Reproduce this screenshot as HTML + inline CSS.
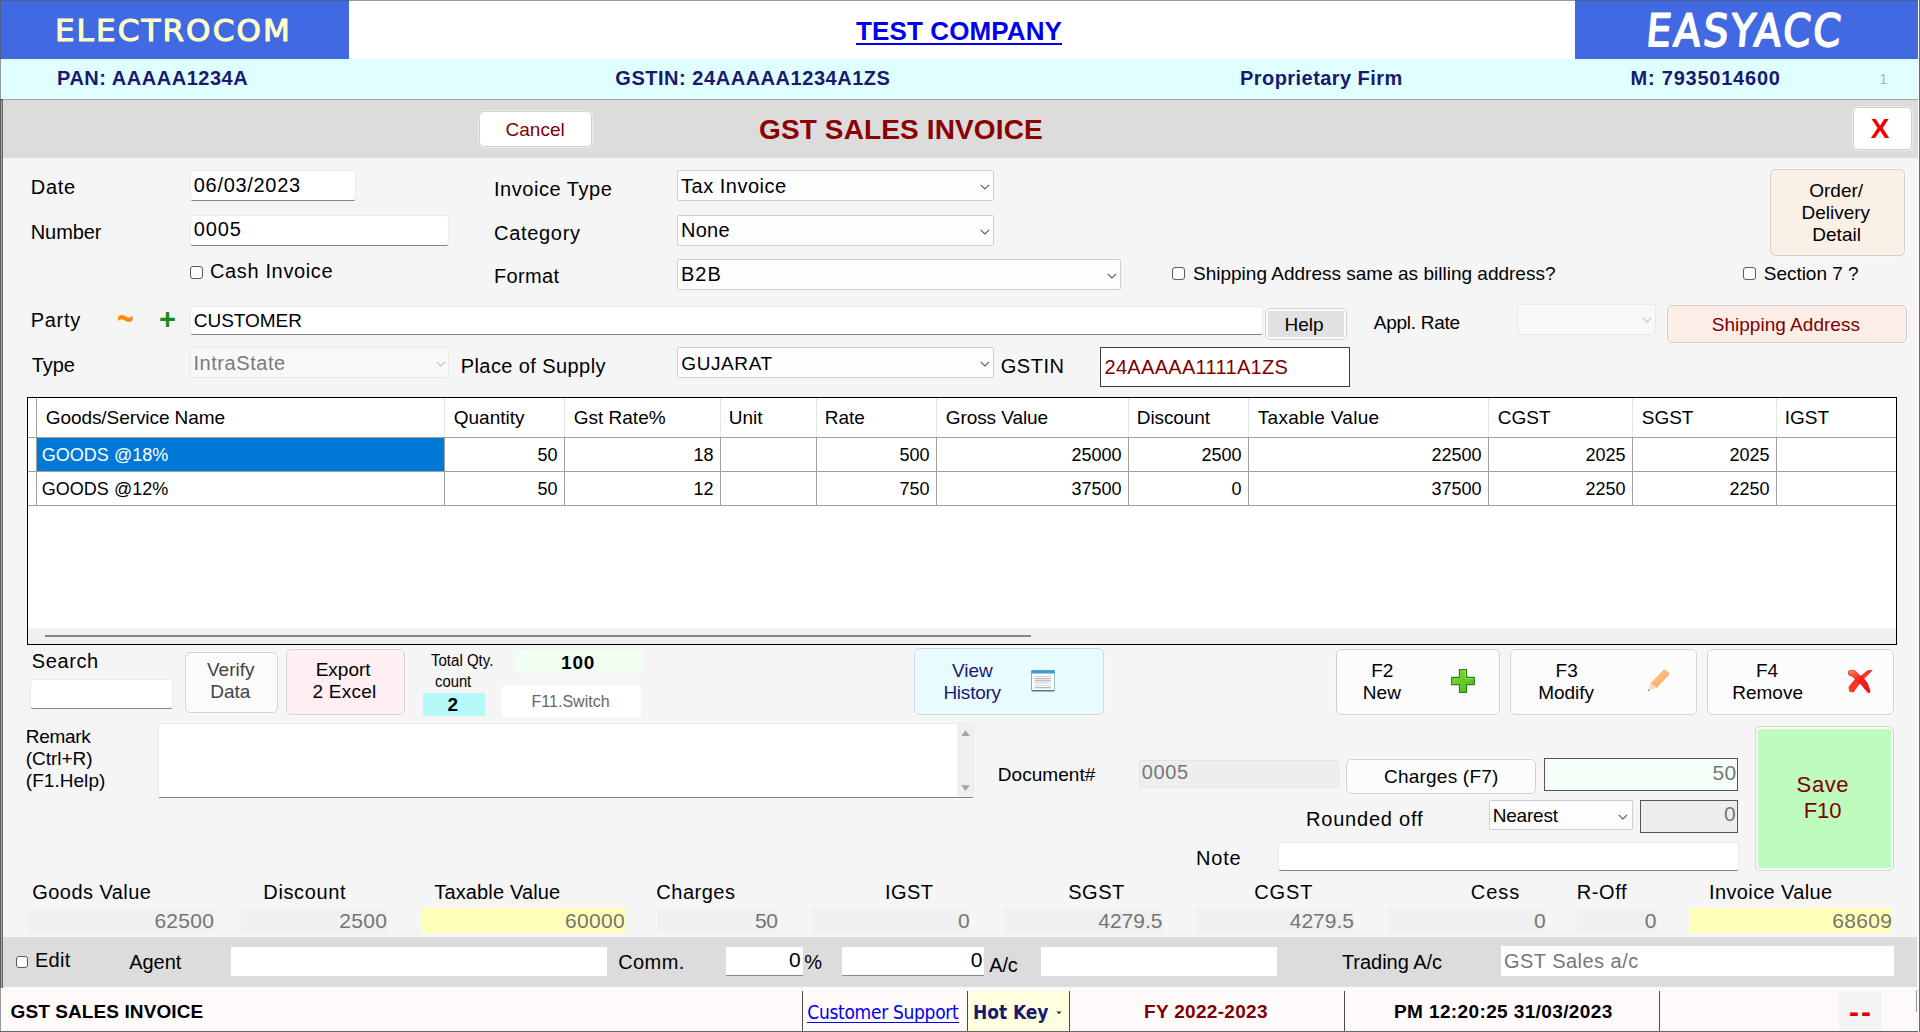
<!DOCTYPE html>
<html><head><meta charset="utf-8"><title>GST SALES INVOICE</title>
<style>
*{box-sizing:border-box;margin:0;padding:0}
html,body{width:1920px;height:1032px;overflow:hidden;background:#f5f5f5}
body{font-family:"Liberation Sans",sans-serif;font-size:20px;color:#000;position:relative}
.a{position:absolute}
.t{position:absolute;white-space:nowrap;line-height:1;display:block}
.in{position:absolute;background:#fff;border:1px solid #ececec;border-bottom:1px solid #858585;border-radius:3px}
.sel{position:absolute;background:#fdfdfd;border:1px solid #cfcfcf;border-radius:2px}
.dis{position:absolute;background:#f8f8f8;border:1px solid #e9e9e9;border-radius:3px}
.btn{position:absolute;border:1px solid #d2d2d2;border-radius:5px;background:#fbfbfb;box-shadow:0 0 0 1px #fafafa}
.cb{position:absolute;border:1px solid #5a5a5a;border-radius:3px;background:#fff}
.vl{position:absolute;width:1px}
.hl{position:absolute;height:1px}
</style></head><body>
<div class="a" style="left:0px;top:0px;width:1920px;height:59px;background:#fff"></div>
<div class="a" style="left:0px;top:0px;width:349px;height:58.5px;background:#4169e1"></div>
<div class="a" style="left:1575px;top:0px;width:343px;height:58.5px;background:#4169e1"></div>
<div class="a" style="left:0px;top:58.5px;width:1920px;height:40.5px;background:#e0ffff"></div>
<div class="a" style="left:0px;top:0px;width:1920px;height:1px;background:rgba(85,85,85,.6)"></div>
<div class="a" style="left:856px;top:43px;width:205.6px;height:2px;background:#0000ee"></div>
<svg class="a" style="left:1575px;top:0" width="343" height="58" viewBox="0 0 343 58"><text transform="translate(70.3,46.2) skewX(-5) scale(0.88,1)" font-family="'DejaVu Sans','Liberation Sans',sans-serif" font-size="44.5" fill="#fff" stroke="#fff" stroke-width="2" stroke-linejoin="round" textLength="220.5" lengthAdjust="spacing">EASYACC</text></svg>
<div class="a" style="left:0px;top:99px;width:1918px;height:58.6px;background:#dcdcdc;border-top:1.6px solid #a3a3a3"></div>
<div class="btn" style="left:479px;top:111px;width:113px;height:36px;background:#fff;border-color:#cfcfcf;box-shadow:0 0 0 1px #ececec"></div>
<div class="btn" style="left:1852.5px;top:107px;width:59.0px;height:43px;background:#fff;border-color:#cfcfcf;box-shadow:0 0 0 1px #ececec"></div>
<div class="in" style="left:190px;top:170px;width:165.5px;height:31px;"></div>
<div class="in" style="left:190px;top:215px;width:258.5px;height:31px;"></div>
<div class="cb" style="left:190px;top:266px;width:13px;height:13px;"></div>
<div class="sel" style="left:677px;top:170px;width:317px;height:31px;"></div>
<svg class="a" style="left:979.7px;top:183.8px" width="10" height="7" viewBox="0 0 10 7"><path d="M0.7 0.8 L4.9 5 L9.1 0.8" fill="none" stroke="#5a5a5a" stroke-width="1.1"/></svg>
<div class="sel" style="left:677px;top:215px;width:317px;height:31px;"></div>
<svg class="a" style="left:979.7px;top:228.8px" width="10" height="7" viewBox="0 0 10 7"><path d="M0.7 0.8 L4.9 5 L9.1 0.8" fill="none" stroke="#5a5a5a" stroke-width="1.1"/></svg>
<div class="sel" style="left:677px;top:259px;width:444px;height:31px;"></div>
<svg class="a" style="left:1107.3px;top:272.8px" width="10" height="7" viewBox="0 0 10 7"><path d="M0.7 0.8 L4.9 5 L9.1 0.8" fill="none" stroke="#5a5a5a" stroke-width="1.1"/></svg>
<div class="cb" style="left:1172px;top:267px;width:13px;height:13px;"></div>
<div class="btn" style="left:1770px;top:169px;width:135px;height:87px;background:#faf0e6;border-color:#d0d0d0"></div>
<div class="cb" style="left:1743px;top:267px;width:13px;height:13px;"></div>
<div class="in" style="left:190px;top:305.5px;width:1072.5px;height:29.5px;"></div>
<div class="a" style="left:1265px;top:308px;width:82px;height:32px;background:#e1e1e1;border:1px solid #d2d2d2;box-shadow:inset 0 0 0 2px #fafafa;border-radius:5px"></div>
<div class="dis" style="left:1517px;top:304px;width:138.5px;height:31px;"></div>
<svg class="a" style="left:1642px;top:316.8px" width="10" height="7" viewBox="0 0 10 7"><path d="M0.7 0.8 L4.9 5 L9.1 0.8" fill="none" stroke="#c4c4c4" stroke-width="1.1"/></svg>
<div class="btn" style="left:1667px;top:305px;width:240px;height:38px;background:#fbeee6;border-color:#d0d0d0"></div>
<div class="dis" style="left:190px;top:347px;width:258.5px;height:31px;"></div>
<svg class="a" style="left:435.5px;top:360.8px" width="10" height="7" viewBox="0 0 10 7"><path d="M0.7 0.8 L4.9 5 L9.1 0.8" fill="none" stroke="#c4c4c4" stroke-width="1.1"/></svg>
<div class="sel" style="left:677px;top:347px;width:317px;height:31px;"></div>
<svg class="a" style="left:979.7px;top:360.8px" width="10" height="7" viewBox="0 0 10 7"><path d="M0.7 0.8 L4.9 5 L9.1 0.8" fill="none" stroke="#5a5a5a" stroke-width="1.1"/></svg>
<div class="a" style="left:1100px;top:347px;width:250px;height:39.5px;background:#fff;border:1px solid #3c3c3c"></div>
<div class="a" style="left:27px;top:397px;width:1870px;height:248px;background:#fff;border:1px solid #000"></div>
<div class="a" style="left:36px;top:398px;width:1px;height:39px;background:#a0a0a0"></div>
<div class="a" style="left:444px;top:398px;width:1px;height:39px;background:#e4e4e4"></div>
<div class="a" style="left:564px;top:398px;width:1px;height:39px;background:#e4e4e4"></div>
<div class="a" style="left:720px;top:398px;width:1px;height:39px;background:#e4e4e4"></div>
<div class="a" style="left:816px;top:398px;width:1px;height:39px;background:#e4e4e4"></div>
<div class="a" style="left:936px;top:398px;width:1px;height:39px;background:#e4e4e4"></div>
<div class="a" style="left:1128px;top:398px;width:1px;height:39px;background:#e4e4e4"></div>
<div class="a" style="left:1248px;top:398px;width:1px;height:39px;background:#e4e4e4"></div>
<div class="a" style="left:1488px;top:398px;width:1px;height:39px;background:#e4e4e4"></div>
<div class="a" style="left:1632px;top:398px;width:1px;height:39px;background:#e4e4e4"></div>
<div class="a" style="left:1776px;top:398px;width:1px;height:39px;background:#e4e4e4"></div>
<div class="a" style="left:28px;top:437px;width:1868px;height:1px;background:#a0a0a0"></div>
<div class="a" style="left:28px;top:471px;width:1868px;height:1px;background:#a0a0a0"></div>
<div class="a" style="left:28px;top:505px;width:1868px;height:1px;background:#a0a0a0"></div>
<div class="a" style="left:36px;top:437px;width:1px;height:69px;background:#a0a0a0"></div>
<div class="a" style="left:444px;top:437px;width:1px;height:69px;background:#a0a0a0"></div>
<div class="a" style="left:564px;top:437px;width:1px;height:69px;background:#a0a0a0"></div>
<div class="a" style="left:720px;top:437px;width:1px;height:69px;background:#a0a0a0"></div>
<div class="a" style="left:816px;top:437px;width:1px;height:69px;background:#a0a0a0"></div>
<div class="a" style="left:936px;top:437px;width:1px;height:69px;background:#a0a0a0"></div>
<div class="a" style="left:1128px;top:437px;width:1px;height:69px;background:#a0a0a0"></div>
<div class="a" style="left:1248px;top:437px;width:1px;height:69px;background:#a0a0a0"></div>
<div class="a" style="left:1488px;top:437px;width:1px;height:69px;background:#a0a0a0"></div>
<div class="a" style="left:1632px;top:437px;width:1px;height:69px;background:#a0a0a0"></div>
<div class="a" style="left:1776px;top:437px;width:1px;height:69px;background:#a0a0a0"></div>
<div class="a" style="left:37px;top:438px;width:407px;height:33px;background:#0078d7"></div>
<div class="a" style="left:28px;top:628px;width:1868px;height:16px;background:#f0f0f0"></div>
<div class="a" style="left:45px;top:635px;width:986px;height:2px;background:#858585"></div>
<div class="in" style="left:29.5px;top:678.75px;width:143.0px;height:29.75px;"></div>
<div class="btn" style="left:184.5px;top:651.5px;width:93.0px;height:61.0px;background:#fbfbfb"></div>
<div class="btn" style="left:285.5px;top:649px;width:119.0px;height:65.5px;background:#ffeef2"></div>
<div class="a" style="left:514.5px;top:650.5px;width:129.25px;height:22.5px;background:#f0fff0"></div>
<div class="a" style="left:423px;top:693px;width:62px;height:23.25px;background:#b4f8f8"></div>
<div class="a" style="left:502px;top:685.75px;width:138.75px;height:31.0px;background:#fff"></div>
<div class="btn" style="left:914.25px;top:648px;width:189.5px;height:66.5px;background:#e8fcff;border-color:#d0d8da"></div>
<div class="btn" style="left:1336.25px;top:648.75px;width:163.5px;height:65.75px;background:#fcfcfc"></div>
<div class="btn" style="left:1509.5px;top:648.75px;width:187.0px;height:65.75px;background:#fcfcfc"></div>
<div class="btn" style="left:1706.5px;top:648.75px;width:187.0px;height:65.75px;background:#fcfcfc"></div>
<div class="in" style="left:157.5px;top:722.5px;width:816.5px;height:75.5px;border-radius:2px"></div>
<div class="a" style="left:957px;top:723.5px;width:16px;height:73.5px;background:#f0f0f0"></div>
<div class="a" style="left:1138.75px;top:759.5px;width:200.0px;height:28.0px;background:#eeeeee;border:1px solid #e6e6e6;border-radius:2px"></div>
<div class="btn" style="left:1346.25px;top:759.25px;width:189.25px;height:35.0px;background:#fcfcfc"></div>
<div class="a" style="left:1544px;top:758px;width:194px;height:32.75px;background:#f5fff8;border:1px solid #555"></div>
<div class="sel" style="left:1489px;top:800px;width:143.5px;height:29.5px;"></div>
<svg class="a" style="left:1618px;top:813.5px" width="10" height="7" viewBox="0 0 10 7"><path d="M0.7 0.8 L4.9 5 L9.1 0.8" fill="none" stroke="#5a5a5a" stroke-width="1.1"/></svg>
<div class="a" style="left:1640px;top:800px;width:98px;height:32.5px;background:#ededed;border:1px solid #555"></div>
<div class="in" style="left:1278px;top:842px;width:461.25px;height:29px;"></div>
<div class="a" style="left:1755px;top:726px;width:139px;height:145px;background:#bdfcbd;border:1px solid #d6d6d6;box-shadow:inset 0 0 0 2px #f8f8f8;border-radius:5px"></div>
<div class="a" style="left:29.3px;top:908.3px;width:185.0px;height:25.0px;background:#f0f0f0"></div>
<div class="a" style="left:241px;top:908.3px;width:146.3px;height:25.0px;background:#f0f0f0"></div>
<div class="a" style="left:420.7px;top:908.3px;width:204.3px;height:25.0px;background:#ffffb9"></div>
<div class="a" style="left:658.3px;top:908.3px;width:120.0px;height:25.0px;background:#f0f0f0"></div>
<div class="a" style="left:812.3px;top:908.3px;width:157.7px;height:25.0px;background:#f0f0f0"></div>
<div class="a" style="left:1004.3px;top:908.3px;width:158.4px;height:25.0px;background:#f0f0f0"></div>
<div class="a" style="left:1196.2px;top:908.3px;width:158.0px;height:25.0px;background:#f0f0f0"></div>
<div class="a" style="left:1388px;top:908.3px;width:158px;height:25.0px;background:#f0f0f0"></div>
<div class="a" style="left:1577px;top:908.3px;width:79.8px;height:25.0px;background:#f0f0f0"></div>
<div class="a" style="left:1690px;top:908.3px;width:202.2px;height:25.0px;background:#ffffb9"></div>
<div class="a" style="left:0px;top:936.7px;width:1917px;height:50.0px;background:#dcdcdc"></div>
<div class="cb" style="left:15.7px;top:955.7px;width:12.5px;height:12.5px;"></div>
<div class="a" style="left:231px;top:946.7px;width:376.3px;height:29.3px;background:#fff"></div>
<div class="a" style="left:725.7px;top:946.7px;width:77.0px;height:29.8px;background:#fff;border-bottom:1px solid #8a8a8a"></div>
<div class="a" style="left:841.7px;top:946.7px;width:142.3px;height:29.8px;background:#fff;border-bottom:1px solid #8a8a8a"></div>
<div class="a" style="left:1040.7px;top:946.7px;width:236.3px;height:29.3px;background:#fff"></div>
<div class="a" style="left:1501px;top:946.3px;width:393.2px;height:30.1px;background:#fff"></div>
<div class="a" style="left:0px;top:986.7px;width:1917px;height:45.3px;background:#fffafa"></div>
<div class="a" style="left:0px;top:1030.5px;width:1920px;height:1.5px;background:#666"></div>
<div class="a" style="left:967px;top:991px;width:102px;height:39.5px;background:#ffffe0"></div>
<div class="a" style="left:1839px;top:991px;width:42.7px;height:39.5px;background:#f4f4f4"></div>
<div class="a" style="left:802px;top:991px;width:1px;height:39.5px;background:#4a4a4a"></div>
<div class="a" style="left:966.5px;top:991px;width:1.0px;height:39.5px;background:#4a4a4a"></div>
<div class="a" style="left:1069px;top:991px;width:1px;height:39.5px;background:#4a4a4a"></div>
<div class="a" style="left:1344px;top:991px;width:1px;height:39.5px;background:#4a4a4a"></div>
<div class="a" style="left:1659px;top:991px;width:1px;height:39.5px;background:#4a4a4a"></div>
<div class="a" style="left:807.3px;top:1021.5px;width:151.7px;height:1.2px;background:#0000ee"></div>
<svg class="a" style="left:1056px;top:1010.5px" width="6" height="4" viewBox="0 0 6 4"><path d="M0.5 0.5 L5.5 0.5 L3 3.2 Z" fill="#222"/></svg>
<div class="a" style="left:0px;top:99px;width:3px;height:889px;background:#686868"></div>
<div class="a" style="left:1px;top:101px;width:1px;height:887px;background:#a4a4a4"></div>
<div class="a" style="left:1918px;top:0px;width:1px;height:1032px;background:#fcfcfc"></div>
<div class="a" style="left:1919px;top:0px;width:1px;height:1032px;background:#6a6a6a"></div>
<div class="a" style="left:1916px;top:990px;width:1px;height:22px;background:#9a9a9a"></div>
<div class="a" style="left:0px;top:0px;width:1px;height:1032px;background:rgba(85,85,85,.6)"></div>
<svg class="a" style="left:1031px;top:669.5px" width="24.2" height="22" viewBox="0 0 24.2 22"><rect x="0.5" y="0.5" width="23.2" height="20.6" rx="1.2" fill="#fff" stroke="#86aed0" stroke-width="1"/><rect x="0.3" y="0.2" width="23.6" height="3.2" rx="1" fill="#3f9bd1"/><rect x="0.8" y="20" width="22.6" height="1.3" rx="0.6" fill="#4b7d95"/><rect x="3.4" y="6" width="16.5" height="0.9" fill="#cfcfc8"/><rect x="3.4" y="8.3" width="16.5" height="0.9" fill="#9a9aa0"/><rect x="3.4" y="10.4" width="16.5" height="0.9" fill="#9a9aa0"/><rect x="3.4" y="12.5" width="16.5" height="0.9" fill="#c9c9c9"/><rect x="3.4" y="15.2" width="16.5" height="0.9" fill="#d4d4d4"/><rect x="3.4" y="17.3" width="16.5" height="0.9" fill="#9a9aa0"/></svg>
<svg class="a" style="left:1451px;top:669px" width="24" height="24" viewBox="0 0 24 24"><defs><linearGradient id="gp" x1="0" y1="0" x2="1" y2="1"><stop offset="0" stop-color="#86e02c"/><stop offset="1" stop-color="#48b62e"/></linearGradient></defs><path d="M8.4 0.6H15.6V8.4H23.4V15.6H15.6V23.4H8.4V15.6H0.6V8.4H8.4Z" fill="url(#gp)" stroke="#2f7d1c" stroke-width="1.1" stroke-linejoin="round"/><path d="M9.6 1.8H14.4V9.6H22.2" fill="none" stroke="#b4f07a" stroke-width="0.8" opacity="0.7"/></svg>
<svg class="a" style="left:1647px;top:669px" width="23" height="23" viewBox="0 0 23 23"><defs><linearGradient id="gq" x1="0" y1="0" x2="1" y2="1"><stop offset="0" stop-color="#ffd66e"/><stop offset="1" stop-color="#f79a82"/></linearGradient></defs><path d="M16.7 0.7 Q17.8 0.1 18.8 1.1 L21.8 4 Q22.6 5 21.9 5.9 L9.7 18.9 L3.5 14.3 Z" fill="url(#gq)"/><path d="M3.5 14.3 L9.7 18.9 L2.4 21.6 L1 21.8 L1.3 20 Z" fill="#f6dcc0"/><path d="M1 21.8 L1.25 20.2 L2.6 21.3 Z" fill="#4e3a20"/></svg>
<svg class="a" style="left:1848px;top:670px" width="25" height="24" viewBox="0 0 25 24"><defs><linearGradient id="gx" x1="0" y1="0" x2="1" y2="1"><stop offset="0" stop-color="#ff8a6a"/><stop offset="0.45" stop-color="#ff2414"/><stop offset="1" stop-color="#e8101c"/></linearGradient></defs><path d="M1.16 16.74 L1.43 20.62 L2.52 21.86 L5.62 21.78 L8.72 17.13 L14.15 10.54 L24.03 0.39 L20.35 0.16 L13.76 5.50 L7.17 9.38 L1.43 16.36 Z" fill="#ff3a1c" stroke="#c8141a" stroke-width="0.7" stroke-linejoin="round"/><path d="M0.12 1.63 L1.43 0.16 L6.40 0.16 L11.82 5.50 L16.47 9.57 L19.38 13.26 L22.09 21.01 L21.20 22.95 L19.96 22.56 L17.64 19.84 L11.82 12.87 L4.46 6.47 L0.78 4.92 Z" fill="url(#gx)" stroke="#cc1418" stroke-width="0.7" stroke-linejoin="round"/></svg>
<svg class="a" style="left:960.5px;top:729.8px" width="9" height="6.2" viewBox="0 0 9 6.2"><path d="M0.3 6 L4.5 0.3 L8.7 6 Z" fill="#a3a3a3"/></svg>
<svg class="a" style="left:960.5px;top:784.8px" width="9" height="6.2" viewBox="0 0 9 6.2"><path d="M0.3 0.2 L4.5 5.9 L8.7 0.2 Z" fill="#a3a3a3"/></svg>
<span class="t" style="left:54.90px;top:14.70px;font-size:31px;font-family:'DejaVu Sans','Liberation Sans',sans-serif;color:#ffffc8;letter-spacing:2.110px;-webkit-text-stroke:1.1px #ffffc8;">ELECTROCOM</span>
<span class="t" style="left:856.00px;top:18.20px;font-size:26px;font-weight:bold;color:#0000ee;letter-spacing:0.119px;">TEST COMPANY</span>
<span class="t" style="left:57.00px;top:68.20px;font-size:20px;font-weight:bold;color:#191970;letter-spacing:0.524px;">PAN: AAAAA1234A</span>
<span class="t" style="left:615.30px;top:68.20px;font-size:20px;font-weight:bold;color:#191970;letter-spacing:0.535px;">GSTIN: 24AAAAA1234A1ZS</span>
<span class="t" style="left:1240.00px;top:68.20px;font-size:20px;font-weight:bold;color:#191970;letter-spacing:0.445px;">Proprietary Firm</span>
<span class="t" style="left:1630.60px;top:68.20px;font-size:20px;font-weight:bold;color:#191970;letter-spacing:0.768px;">M: 7935014600</span>
<span class="t" style="left:1879.50px;top:72.00px;font-size:14px;color:#9fb4b8;">1</span>
<span class="t" style="left:505.54px;top:119.50px;font-size:19px;color:#800000;">Cancel</span>
<span class="t" style="left:759.00px;top:115.50px;font-size:28px;font-weight:bold;color:#8b0000;letter-spacing:0.130px;">GST SALES INVOICE</span>
<span class="t" style="left:1870.70px;top:114.50px;font-size:28px;font-weight:bold;color:#ee0000;">X</span>
<span class="t" style="left:30.75px;top:176.75px;font-size:20px;letter-spacing:0.709px;">Date</span>
<span class="t" style="left:193.75px;top:174.75px;font-size:20px;letter-spacing:0.697px;">06/03/2023</span>
<span class="t" style="left:30.75px;top:221.75px;font-size:20px;letter-spacing:-0.095px;">Number</span>
<span class="t" style="left:193.75px;top:219.25px;font-size:20px;letter-spacing:0.877px;">0005</span>
<span class="t" style="left:210.00px;top:261.25px;font-size:20px;letter-spacing:0.637px;">Cash Invoice</span>
<span class="t" style="left:494.00px;top:179.25px;font-size:20px;letter-spacing:0.531px;">Invoice Type</span>
<span class="t" style="left:681.00px;top:175.50px;font-size:20px;letter-spacing:0.507px;">Tax Invoice</span>
<span class="t" style="left:494.00px;top:222.50px;font-size:20px;letter-spacing:0.693px;">Category</span>
<span class="t" style="left:681.00px;top:220.00px;font-size:20px;letter-spacing:0.270px;">None</span>
<span class="t" style="left:494.00px;top:265.50px;font-size:20px;letter-spacing:0.343px;">Format</span>
<span class="t" style="left:681.00px;top:264.00px;font-size:20px;letter-spacing:1.019px;">B2B</span>
<span class="t" style="left:1193.00px;top:263.50px;font-size:19px;letter-spacing:0.006px;">Shipping Address same as billing address?</span>
<span class="t" style="left:1809.22px;top:180.75px;font-size:19px;">Order/</span>
<span class="t" style="left:1801.44px;top:203.25px;font-size:19px;">Delivery</span>
<span class="t" style="left:1812.32px;top:224.75px;font-size:19px;">Detail</span>
<span class="t" style="left:1763.75px;top:263.50px;font-size:19px;letter-spacing:-0.025px;">Section 7 ?</span>
<span class="t" style="left:30.75px;top:310.00px;font-size:20px;letter-spacing:0.705px;">Party</span>
<span class="t" style="left:117.32px;top:298.30px;font-size:42px;font-weight:bold;color:#ff8c00;transform:scaleX(0.6818);transform-origin:0 0;">~</span>
<span class="t" style="left:159.00px;top:304.70px;font-size:29px;font-weight:bold;color:#1a8a1a;">+</span>
<span class="t" style="left:193.75px;top:310.75px;font-size:19px;letter-spacing:-0.022px;">CUSTOMER</span>
<span class="t" style="left:1284.50px;top:314.70px;font-size:19px;">Help</span>
<span class="t" style="left:1373.75px;top:313.25px;font-size:19px;letter-spacing:-0.267px;">Appl. Rate</span>
<span class="t" style="left:1711.75px;top:315.25px;font-size:19px;color:#800000;letter-spacing:0.021px;">Shipping Address</span>
<span class="t" style="left:31.75px;top:355.00px;font-size:20px;letter-spacing:-0.079px;">Type</span>
<span class="t" style="left:193.50px;top:352.50px;font-size:20px;color:#7a7a7a;letter-spacing:0.545px;">IntraState</span>
<span class="t" style="left:460.75px;top:355.50px;font-size:20px;letter-spacing:0.413px;">Place of Supply</span>
<span class="t" style="left:681.25px;top:353.50px;font-size:19px;letter-spacing:0.599px;">GUJARAT</span>
<span class="t" style="left:1000.75px;top:355.50px;font-size:20px;letter-spacing:0.520px;">GSTIN</span>
<span class="t" style="left:1104.50px;top:356.75px;font-size:20px;color:#800000;letter-spacing:0.310px;">24AAAAA1111A1ZS</span>
<span class="t" style="left:45.75px;top:407.75px;font-size:19px;letter-spacing:-0.074px;">Goods/Service Name</span>
<span class="t" style="left:453.75px;top:407.75px;font-size:19px;">Quantity</span>
<span class="t" style="left:573.75px;top:407.75px;font-size:19px;">Gst Rate%</span>
<span class="t" style="left:728.75px;top:407.75px;font-size:19px;">Unit</span>
<span class="t" style="left:824.75px;top:407.75px;font-size:19px;">Rate</span>
<span class="t" style="left:945.75px;top:407.75px;font-size:19px;letter-spacing:-0.082px;">Gross Value</span>
<span class="t" style="left:1136.75px;top:407.75px;font-size:19px;letter-spacing:-0.092px;">Discount</span>
<span class="t" style="left:1257.75px;top:407.75px;font-size:19px;letter-spacing:0.280px;">Taxable Value</span>
<span class="t" style="left:1497.75px;top:407.75px;font-size:19px;">CGST</span>
<span class="t" style="left:1641.75px;top:407.75px;font-size:19px;">SGST</span>
<span class="t" style="left:1784.75px;top:407.75px;font-size:19px;">IGST</span>
<span class="t" style="left:41.75px;top:446.25px;font-size:18px;color:#fff;letter-spacing:0.022px;">GOODS @18%</span>
<span class="t" style="left:41.75px;top:480.00px;font-size:18px;letter-spacing:0.022px;">GOODS @12%</span>
<span class="t" style="left:537.49px;top:446.25px;font-size:18px;">50</span>
<span class="t" style="left:537.49px;top:480.00px;font-size:18px;">50</span>
<span class="t" style="left:693.49px;top:446.25px;font-size:18px;">18</span>
<span class="t" style="left:693.49px;top:480.00px;font-size:18px;">12</span>
<span class="t" style="left:899.48px;top:446.25px;font-size:18px;">500</span>
<span class="t" style="left:899.48px;top:480.00px;font-size:18px;">750</span>
<span class="t" style="left:1071.46px;top:446.25px;font-size:18px;">25000</span>
<span class="t" style="left:1071.46px;top:480.00px;font-size:18px;">37500</span>
<span class="t" style="left:1201.47px;top:446.25px;font-size:18px;">2500</span>
<span class="t" style="left:1231.50px;top:480.00px;font-size:18px;">0</span>
<span class="t" style="left:1431.46px;top:446.25px;font-size:18px;">22500</span>
<span class="t" style="left:1431.46px;top:480.00px;font-size:18px;">37500</span>
<span class="t" style="left:1585.47px;top:446.25px;font-size:18px;">2025</span>
<span class="t" style="left:1585.47px;top:480.00px;font-size:18px;">2250</span>
<span class="t" style="left:1729.47px;top:446.25px;font-size:18px;">2025</span>
<span class="t" style="left:1729.47px;top:480.00px;font-size:18px;">2250</span>
<span class="t" style="left:31.75px;top:651.25px;font-size:20px;letter-spacing:0.601px;">Search</span>
<span class="t" style="left:206.99px;top:659.75px;font-size:19px;color:#444;">Verify</span>
<span class="t" style="left:210.22px;top:681.50px;font-size:19px;color:#444;">Data</span>
<span class="t" style="left:315.68px;top:660.25px;font-size:19px;">Export</span>
<span class="t" style="left:312.50px;top:682.25px;font-size:19px;letter-spacing:0.236px;">2 Excel</span>
<span class="t" style="left:431.25px;top:653.00px;font-size:16px;transform:scaleX(0.9393);transform-origin:0 0;">Total Qty.</span>
<span class="t" style="left:434.50px;top:674.10px;font-size:16px;transform:scaleX(0.9258);transform-origin:0 0;">count</span>
<span class="t" style="left:561.02px;top:652.70px;font-size:19px;font-weight:bold;letter-spacing:0.808px;">100</span>
<span class="t" style="left:447.50px;top:695.25px;font-size:19px;font-weight:bold;">2</span>
<span class="t" style="left:531.50px;top:693.50px;font-size:16px;color:#666;letter-spacing:0.022px;">F11.Switch</span>
<span class="t" style="left:951.94px;top:660.75px;font-size:19px;color:#191970;">View</span>
<span class="t" style="left:943.38px;top:682.75px;font-size:19px;color:#191970;letter-spacing:-0.228px;">History</span>
<span class="t" style="left:1371.20px;top:660.90px;font-size:19px;">F2</span>
<span class="t" style="left:1362.86px;top:682.75px;font-size:19px;">New</span>
<span class="t" style="left:1555.60px;top:660.90px;font-size:19px;">F3</span>
<span class="t" style="left:1538.17px;top:682.75px;font-size:19px;">Modify</span>
<span class="t" style="left:1756.00px;top:660.90px;font-size:19px;">F4</span>
<span class="t" style="left:1732.21px;top:682.75px;font-size:19px;">Remove</span>
<span class="t" style="left:25.75px;top:727.25px;font-size:19px;letter-spacing:-0.302px;">Remark</span>
<span class="t" style="left:25.75px;top:749.00px;font-size:19px;letter-spacing:-0.027px;">(Ctrl+R)</span>
<span class="t" style="left:25.75px;top:771.00px;font-size:19px;letter-spacing:0.049px;">(F1.Help)</span>
<span class="t" style="left:997.75px;top:764.75px;font-size:19px;letter-spacing:0.051px;">Document#</span>
<span class="t" style="left:1141.75px;top:762.25px;font-size:20px;color:#777;letter-spacing:0.627px;">0005</span>
<span class="t" style="left:1384.00px;top:766.50px;font-size:19px;letter-spacing:0.219px;">Charges (F7)</span>
<span class="t" style="left:1712.50px;top:762.00px;font-size:21px;color:#777;letter-spacing:0.321px;">50</span>
<span class="t" style="left:1306.00px;top:808.50px;font-size:20px;letter-spacing:0.794px;">Rounded off</span>
<span class="t" style="left:1492.75px;top:805.75px;font-size:19px;letter-spacing:-0.208px;">Nearest</span>
<span class="t" style="left:1724.00px;top:803.25px;font-size:21px;color:#777;">0</span>
<span class="t" style="left:1196.00px;top:848.00px;font-size:20px;letter-spacing:0.792px;">Note</span>
<span class="t" style="left:1796.62px;top:773.50px;font-size:22px;color:#800000;letter-spacing:0.614px;">Save</span>
<span class="t" style="left:1803.66px;top:799.50px;font-size:22px;color:#800000;">F10</span>
<span class="t" style="left:32.30px;top:882.00px;font-size:20px;letter-spacing:0.437px;">Goods Value</span>
<span class="t" style="left:263.30px;top:882.00px;font-size:20px;letter-spacing:0.635px;">Discount</span>
<span class="t" style="left:434.30px;top:882.00px;font-size:20px;letter-spacing:0.139px;">Taxable Value</span>
<span class="t" style="left:656.30px;top:882.00px;font-size:20px;letter-spacing:0.517px;">Charges</span>
<span class="t" style="left:885.00px;top:882.00px;font-size:20px;letter-spacing:0.416px;">IGST</span>
<span class="t" style="left:1068.30px;top:882.00px;font-size:20px;letter-spacing:0.488px;">SGST</span>
<span class="t" style="left:1254.20px;top:882.00px;font-size:20px;letter-spacing:0.887px;">CGST</span>
<span class="t" style="left:1470.80px;top:882.00px;font-size:20px;letter-spacing:0.945px;">Cess</span>
<span class="t" style="left:1576.70px;top:882.00px;font-size:20px;letter-spacing:0.611px;">R-Off</span>
<span class="t" style="left:1709.00px;top:882.00px;font-size:20px;letter-spacing:0.377px;">Invoice Value</span>
<span class="t" style="left:154.40px;top:909.70px;font-size:21px;color:#757575;letter-spacing:0.296px;">62500</span>
<span class="t" style="left:339.30px;top:909.70px;font-size:21px;color:#757575;letter-spacing:0.321px;">2500</span>
<span class="t" style="left:565.10px;top:909.70px;font-size:21px;color:#757575;letter-spacing:0.296px;">60000</span>
<span class="t" style="left:755.10px;top:909.70px;font-size:21px;color:#757575;letter-spacing:-0.479px;">50</span>
<span class="t" style="left:958.00px;top:909.70px;font-size:21px;color:#757575;">0</span>
<span class="t" style="left:1098.30px;top:909.70px;font-size:21px;color:#757575;letter-spacing:-0.030px;">4279.5</span>
<span class="t" style="left:1289.80px;top:909.70px;font-size:21px;color:#757575;letter-spacing:-0.030px;">4279.5</span>
<span class="t" style="left:1534.00px;top:909.70px;font-size:21px;color:#757575;">0</span>
<span class="t" style="left:1644.80px;top:909.70px;font-size:21px;color:#757575;">0</span>
<span class="t" style="left:1832.30px;top:909.70px;font-size:21px;color:#757575;letter-spacing:0.296px;">68609</span>
<span class="t" style="left:35.00px;top:950.30px;font-size:20px;letter-spacing:0.265px;">Edit</span>
<span class="t" style="left:129.30px;top:952.30px;font-size:20px;letter-spacing:-0.077px;">Agent</span>
<span class="t" style="left:618.30px;top:952.30px;font-size:20px;letter-spacing:0.378px;">Comm.</span>
<span class="t" style="left:789.00px;top:948.70px;font-size:21px;">0</span>
<span class="t" style="left:804.30px;top:952.30px;font-size:20px;">%</span>
<span class="t" style="left:970.70px;top:948.70px;font-size:21px;">0</span>
<span class="t" style="left:989.30px;top:954.70px;font-size:20px;letter-spacing:-0.248px;">A/c</span>
<span class="t" style="left:1341.90px;top:952.40px;font-size:20px;letter-spacing:-0.022px;">Trading A/c</span>
<span class="t" style="left:1504.00px;top:950.50px;font-size:20px;color:#777;letter-spacing:0.472px;">GST Sales a/c</span>
<span class="t" style="left:10.50px;top:1001.70px;font-size:19px;font-weight:bold;letter-spacing:0.099px;">GST SALES INVOICE</span>
<span class="t" style="left:807.30px;top:1002.80px;font-size:19px;font-family:'DejaVu Sans Condensed','DejaVu Sans',sans-serif;color:#0000ee;letter-spacing:-0.309px;">Customer Support</span>
<span class="t" style="left:973.00px;top:1002.80px;font-size:19px;font-family:'DejaVu Sans Condensed','DejaVu Sans',sans-serif;font-weight:bold;color:#191970;letter-spacing:-0.064px;">Hot Key</span>
<span class="t" style="left:1144.00px;top:1001.70px;font-size:19px;font-weight:bold;color:#800000;letter-spacing:0.313px;">FY 2022-2023</span>
<span class="t" style="left:1394.00px;top:1001.70px;font-size:19px;font-weight:bold;letter-spacing:0.384px;">PM 12:20:25 31/03/2023</span>
<span class="t" style="left:1849.00px;top:997.30px;font-size:30px;font-weight:bold;color:#e00000;letter-spacing:2.010px;">--</span>
</body></html>
